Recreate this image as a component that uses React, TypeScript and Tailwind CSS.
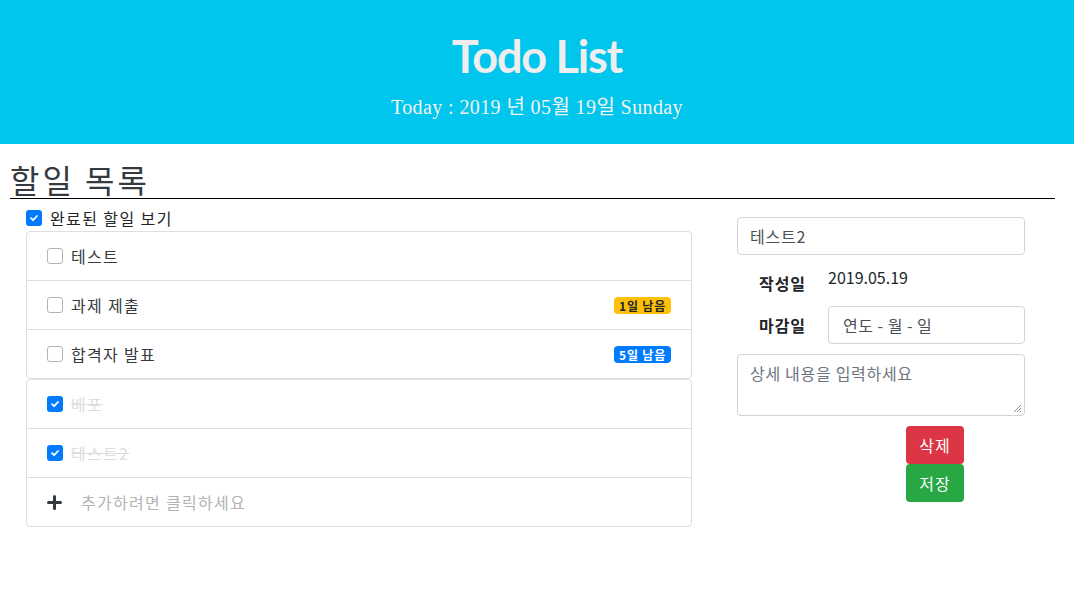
import React from "react";

const KR = "font-['Noto_Sans_CJK_KR','Noto_Sans',sans-serif]";

function Box({ checked }: { checked: boolean }) {
  if (checked) {
    return (
      <span className="flex h-4 w-4 shrink-0 items-center justify-center rounded-[3px] bg-[#007bff]">
        <svg width="10" height="10" viewBox="0 0 10 10">
          <path d="M2 5.2 L4.1 7.2 L8 3" fill="none" stroke="white" strokeWidth="1.8" strokeLinecap="round" strokeLinejoin="round" />
        </svg>
      </span>
    );
  }
  return <span className="h-4 w-4 shrink-0 rounded-[3px] border border-[#adb5bd] bg-white" />;
}

function Row({ text, checked, badge, last }: { text: string; checked: boolean; badge?: { t: string; c: string }; last?: boolean }) {
  return (
    <div className={`flex items-center px-5 ${last ? "h-[48px]" : "h-[49px] border-b border-[#dfdfdf]"}`}>
      <Box checked={checked} />
      <span className={`ml-2 mt-[-1px] text-[16px] leading-6 tracking-[1.3px] ${checked ? "text-[#dddddd] line-through" : "text-[#343a40]"}`}>{text}</span>
      {badge && (
        <span className={`ml-auto rounded-[4px] px-[5px] text-[12px] font-bold leading-[17px] tracking-[0.8px] ${badge.c}`}>{badge.t}</span>
      )}
    </div>
  );
}

export default function App() {
  return (
    <div className={`min-h-[599px] w-[1074px] bg-white ${KR}`}>
      <header className="flex h-[144px] flex-col items-center bg-[#00c5ec]">
        <h1 className="mt-[26px] font-['Lato',sans-serif] text-[45px] font-bold leading-[60px] tracking-[-1.2px] text-[#eeeeee]">Todo List</h1>
        <p className="mt-[9px] font-['Liberation_Serif','Noto_Sans_CJK_KR',serif] text-[20px] leading-6 tracking-[0.4px] text-[#f3f3f3]">Today : 2019 년 05월 19일 Sunday</p>
      </header>
      <div className="pl-[10px] pr-[19px]">
        <h2 className="mt-[16px] border-b border-black pb-0 text-[32px] leading-[38px] tracking-[3px] text-[#343a40]">할일 목록</h2>
      </div>
      <div className="flex">
        <div className="ml-[26px] w-[666px]">
          <label className="mt-[7px] flex h-6 items-center text-[16px] leading-6 text-[#212529]">
            <Box checked={true} />
            <span className="ml-2 tracking-[1.4px]">완료된 할일 보기</span>
          </label>
          <div className="mt-[1px] rounded-[4px] border border-[#dfdfdf]">
            <Row text="테스트" checked={false} />
            <Row text="과제 제출" checked={false} badge={{ t: "1일 남음", c: "bg-[#ffc107] text-[#212529]" }} />
            <Row text="합격자 발표" checked={false} badge={{ t: "5일 남음", c: "bg-[#007bff] text-white" }} last />
          </div>
          <div className="rounded-[4px] border border-[#dfdfdf]">
            <Row text="배포" checked={true} />
            <Row text="테스트2" checked={true} />
            <div className="flex h-[48px] items-center px-5">
              <svg width="15" height="15" viewBox="0 0 15 15">
                <path d="M7.5 1.5 V13.5 M1.5 7.5 H13.5" stroke="#343a40" strokeWidth="3" strokeLinecap="round" />
              </svg>
              <span className="ml-[19px] mt-[-1px] text-[16px] leading-6 tracking-[1.3px] text-[#b3b3b3]">추가하려면 클릭하세요</span>
            </div>
          </div>
        </div>
        <div className="ml-[45px] w-[288px] pt-[18px]">
          <div className="flex h-[38px] items-center rounded-[4px] border border-[#ced4da] px-3 text-[16px] tracking-[0.8px] text-[#495057]">테스트2</div>
          <div className="mt-[10px] flex">
            <div className="w-[91px] pt-[6px] text-center text-[16px] font-bold leading-6 tracking-[1px] text-[#212529]">작성일</div>
            <div className="text-[16px] leading-6 text-[#212529]">2019.05.19</div>
          </div>
          <div className="mt-[11px] flex items-center">
            <div className="w-[91px] text-center text-[16px] font-bold leading-6 tracking-[1px] text-[#212529]">마감일</div>
            <div className="flex h-[38px] flex-1 items-center rounded-[4px] border border-[#ced4da] px-3 text-[16px] text-[#495057]">
              <span className="ml-[2px] tracking-[0.5px]">연도 - 월 - 일</span>
            </div>
          </div>
          <div className="relative mt-[10px] h-[62px] rounded-[4px] border border-[#ced4da] px-3 pt-[6px] text-[16px] leading-6 tracking-[0.7px] text-[#6c757d]">
            상세 내용을 입력하세요
            <svg className="absolute bottom-[2px] right-[2px]" width="9" height="9" viewBox="0 0 9 9">
              <path d="M8 1 L1 8 M8 4 L4 8 M8 7 L7 8" stroke="#888" strokeWidth="1" />
            </svg>
          </div>
          <div className="ml-[169px] mt-[10px] flex w-[58px] flex-col">
            <button className="h-[38px] w-[58px] rounded-[4px] bg-[#dc3545] text-[16px] tracking-[1px] text-white">삭제</button>
            <button className="h-[38px] w-[58px] rounded-[4px] bg-[#28a745] text-[16px] tracking-[1px] text-white">저장</button>
          </div>
        </div>
      </div>
    </div>
  );
}
